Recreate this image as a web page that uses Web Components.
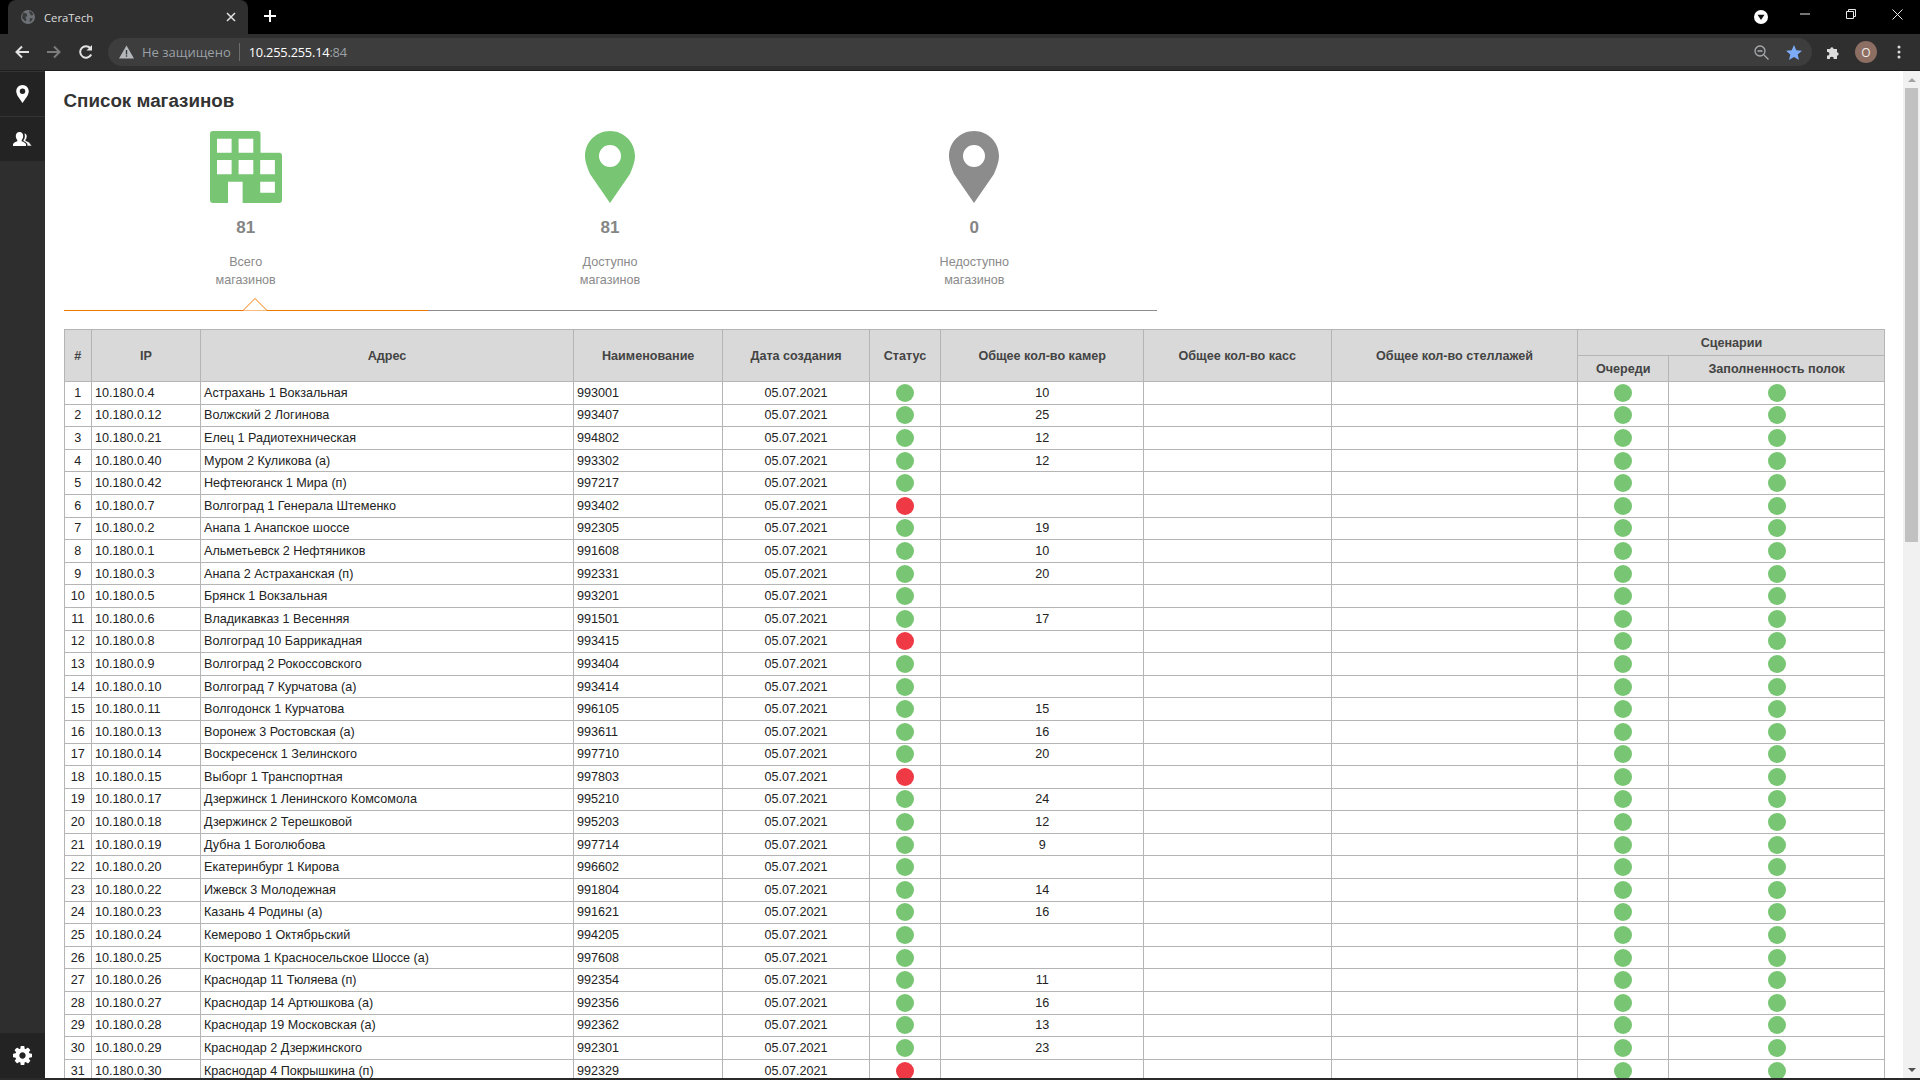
<!DOCTYPE html>
<html lang="ru">
<head>
<meta charset="utf-8">
<title>CeraTech</title>
<style>
    html, body { margin: 0; height: 100%; overflow: hidden; background: #fff; }
    body { display: flex; flex-direction: column; height: 1080px; font-family: "Liberation Sans", Arial, sans-serif; }
</style>
</head>
<body>
<browser-chrome></browser-chrome>
<app-shell>
    <side-nav slot="nav"></side-nav>
    <page-content slot="main">
        <stat-tabs>
            <stat-tile value="81" icon="building" tone="green">Всего<br>магазинов</stat-tile>
            <stat-tile value="81" icon="pin" tone="green">Доступно<br>магазинов</stat-tile>
            <stat-tile value="0" icon="pin" tone="grey">Недоступно<br>магазинов</stat-tile>
        </stat-tabs>
        <store-table></store-table>
    </page-content>
    <page-scrollbar slot="scroll"></page-scrollbar>
</app-shell>
<task-strip></task-strip>

<script>
class BrowserChrome extends HTMLElement {
    constructor() {
        super();
        this.attachShadow({mode: 'open'}).innerHTML = `
        <style>
            :host { display: block; flex: none; height: 71px; font-family: "Open Sans", sans-serif; color: #fff; }
            svg { display: block; flex: none; }
            .strip { height: 34px; background: #000; display: flex; align-items: stretch; padding-left: 8px; }
            .tab {
                width: 240px; background: #2f2f2f; border-radius: 8px 8px 0 0;
                display: flex; align-items: center; padding: 0 12px 0 12px; box-sizing: border-box;
                font-size: 11.3px; color: #dfdfdf;
            }
            .tab span { flex: 1; margin-left: 8px; }
            .plus { margin: 9px 0 0 15px; }
            .spacer { flex: 1; }
            .win { display: flex; align-items: center; }
            .win .ext { margin-right: 14px; }
            .win .btn { width: 46px; display: flex; justify-content: center; padding-bottom: 6px; box-sizing: border-box; }
            .bar {
                height: 37px; background: #2f2f2f; border-bottom: 1px solid #1f1f1f; box-sizing: border-box;
                display: flex; align-items: center; padding: 0 0 0 14px;
            }
            .nav { display: flex; gap: 16px; margin-right: 14px; }
            .omni {
                flex: 1; height: 28px; background: #3d3d3d; border-radius: 14px; display: flex; align-items: center;
                padding: 0 10px 0 11px; font-size: 13px; color: #9aa0a6;
            }
            .omni .warn { margin-left: 8px; }
            .omni .sep { width: 1px; height: 18px; background: #6b6b6b; margin: 0 9px 0 8px; }
            .omni .url { font-size: 12.8px; letter-spacing: -.2px; }
            .omni b { font-weight: 400; color: #fff; }
            .omni .fill { flex: 1; }
            .tools { display: flex; align-items: center; padding: 0 19px 0 14px; }
            .avatar {
                width: 22px; height: 22px; border-radius: 50%; background: #8d6e63; color: #f3ece9; font-size: 12px;
                display: flex; align-items: center; justify-content: center; margin: 0 20px 0 14px;
            }
        </style>
        <div class="strip">
            <div class="tab">
                <svg width="16" height="16" viewBox="0 0 16 16"><circle cx="8" cy="8" r="7" fill="#6d7074"/><path d="M3 3.500l3.500 1 1 2.500-2 1 1 3-1 1.500L2 9zM9 2l3 1 1.500 3-2.500.5L9.500 4zM10 9l3 .5-2.500 3.500-1-1z" fill="#3a3b3d"/></svg>
                <span>CeraTech</span>
                <svg width="10" height="10" viewBox="0 0 10 10"><path d="M1 1l8 8M9 1l-8 8" stroke="#e3e3e3" stroke-width="1.500"/></svg>
            </div>
            <svg class="plus" width="14" height="14" viewBox="0 0 14 14"><path d="M7 1v12M1 7h12" stroke="#fff" stroke-width="2"/></svg>
            <div class="spacer"></div>
            <div class="win">
                <svg class="ext" width="14" height="14" viewBox="0 0 14 14"><circle cx="7" cy="7" r="7" fill="#fff"/><path d="M3.500 4.800h7L7 10z" fill="#111"/></svg>
                <div class="btn"><svg width="10" height="10" viewBox="0 0 10 10"><path d="M0 5h10" stroke="#e8e8e8"/></svg></div>
                <div class="btn"><svg width="10" height="10" viewBox="0 0 10 10" fill="none" stroke="#e8e8e8"><path d="M.5 2.500h7v7h-7zM2.500 2.500v-2h7v7h-2"/></svg></div>
                <div class="btn"><svg width="11" height="11" viewBox="0 0 11 11"><path d="M.5.500l10 10M10.500.500l-10 10" stroke="#e8e8e8"/></svg></div>
            </div>
        </div>
        <div class="bar">
            <div class="nav">
                <svg width="16" height="16" viewBox="0 0 16 16" fill="none" stroke="#e3e3e3" stroke-width="2"><path d="M15 8H2.500M8 2.500L2.500 8 8 13.500"/></svg>
                <svg width="16" height="16" viewBox="0 0 16 16" fill="none" stroke="#7c7c7c" stroke-width="2"><path d="M1 8h12.500M8 2.500L13.500 8 8 13.500"/></svg>
                <svg width="16" height="16" viewBox="0 0 16 16" fill="none" stroke="#e3e3e3" stroke-width="2"><path d="M13.200 10.500A5.800 5.800 0 1 1 12.400 4.200"/><path d="M14 1v5.500H8.500z" fill="#e3e3e3" stroke="none"/></svg>
            </div>
            <div class="omni">
                <svg width="15" height="14" viewBox="0 0 15 14"><path d="M7.500.500L15 13.500H0z" fill="#b5b8bb"/><path d="M6.800 5h1.400v4.500H6.800zM6.800 10.300h1.400v1.500H6.800z" fill="#3d3d3d"/></svg>
                <span class="warn">Не защищено</span>
                <span class="sep"></span>
                <span class="url"><b>10.255.255.14</b>:84</span>
                <span class="fill"></span>
                <svg width="15" height="15" viewBox="0 0 15 15" fill="none" stroke="#a8abae" stroke-width="1.300"><circle cx="6" cy="6" r="5"/><path d="M10 10l4.500 4.500M3.500 6h5"/></svg>
                <svg style="margin-left:17px" width="16" height="15" viewBox="0 0 16 15"><path d="M8 0l2.300 5.200 5.700.5-4.300 3.700 1.300 5.600L8 12.100 3 15l1.300-5.600L0 5.700l5.700-.5z" fill="#7cacf8"/></svg>
            </div>
            <div class="tools">
                <svg width="15" height="15" viewBox="0 0 15 15"><path d="M1 4h3.200a1.700 1.700 0 1 1 3.400 0H11v3.300a1.700 1.700 0 1 1 0 3.400V14H7.500a1.800 1.800 0 1 0-3.500 0H1v-3.600a1.800 1.800 0 1 0 0-3.400z" fill="#dcdcdc"/></svg>
                <div class="avatar">О</div>
                <svg width="4" height="14" viewBox="0 0 4 14" fill="#dcdcdc"><circle cx="2" cy="2" r="1.500"/><circle cx="2" cy="7" r="1.500"/><circle cx="2" cy="12" r="1.500"/></svg>
            </div>
        </div>
        `;
    }
}

class AppShell extends HTMLElement {
    constructor() {
        super();
        this.attachShadow({mode: 'open'}).innerHTML = `
        <style>
            :host { display: flex; flex: 1; min-height: 0; }
            .main { display: block; flex: 1; min-width: 0; overflow: hidden; }
        </style>
        <slot name="nav"></slot>
        <div class="main"><slot name="main"></slot></div>
        <slot name="scroll"></slot>
        `;
    }
}

class SideNav extends HTMLElement {
    constructor() {
        super();
        this.attachShadow({mode: 'open'}).innerHTML = `
        <style>
            :host { display: flex; flex-direction: column; flex: none; width: 45px; background: #2e2e2e; }
            .item { height: 45px; background: #232323; border-top: 1px solid #343434; box-sizing: border-box; display: flex; align-items: center; justify-content: center; }
            .gap { flex: 1; }
            .item.last { border-top: 0; }
            svg { display: block; }
        </style>
        <div class="item">
            <svg width="13" height="18" viewBox="0 0 50 72" fill="#fff"><path fill-rule="evenodd" d="M25 0C11.200 0 0 11.200 0 25 0 31 3 38 5 43L25 72 45 43C47 38 50 31 50 25 50 11.200 38.800 0 25 0zM25 14A11 11 0 1 1 25 36 11 11 0 0 1 25 14z"/></svg>
        </div>
        <div class="item">
            <svg width="19" height="15" viewBox="0 0 19 15" fill="#fff"><path d="M6.500 0C9 0 10.200 1.800 10.200 4c0 1.700-.7 3.100-1.500 3.900v1.300c2 .7 3.800 1.500 4.300 3V14H0v-1.800c.5-1.500 2.300-2.300 4.300-3V7.900C3.500 7.100 2.800 5.700 2.800 4 2.800 1.800 4 0 6.500 0z"/><path d="M11 1.200c2 0 3 1.500 3 3.300 0 1.400-.6 2.500-1.200 3.200v1.100c1.800.6 3.400 1.200 4 2.400L19 14h-4.800l-.2-2.200c-.6-1.100-2-1.900-3.800-2.500V8.200c.9-1 1.400-2.500 1.400-4.200 0-1-.2-1.900-.6-2.700z" stroke="#232323" stroke-width=".6"/></svg>
        </div>
        <div class="gap"></div>
        <div class="item last">
            <svg width="19" height="19" viewBox="128 128 1536 1536" fill="#fff"><path d="M1152 896q0-106-75-181t-181-75-181 75-75 181 75 181 181 75 181-75 75-181zm512-109v222q0 12-8 23t-20 13l-185 28q-19 54-39 91 35 50 107 138 10 12 10 25t-9 23q-27 37-99 108t-94 71q-12 0-26-9l-138-108q-44 23-91 38-16 136-29 186-7 28-36 28h-222q-14 0-24.500-8.500t-11.500-21.500l-28-184q-49-16-90-37l-141 107q-10 9-25 9-14 0-25-11-126-114-165-168-7-10-7-23 0-12 8-23 15-21 51-66.500t54-70.500q-27-50-41-99l-183-27q-13-2-21-12.500t-8-23.500v-222q0-12 8-23t19-13l186-28q14-46 39-92-40-57-107-138-10-12-10-24 0-10 9-23 26-36 98.500-107.500t94.500-71.500q13 0 26 10l138 107q44-23 91-38 16-136 29-186 7-28 36-28h222q14 0 24.500 8.500t11.500 21.500l28 184q49 16 90 37l142-107q9-9 24-9 13 0 25 10 129 119 165 170 7 8 7 22 0 12-8 23-15 21-51 66.500t-54 70.500q26 50 41 98l183 28q13 2 21 12.500t8 23.500z"/></svg>
        </div>
        `;
    }
}

class PageContent extends HTMLElement {
    constructor() {
        super();
        this.attachShadow({mode: 'open'}).innerHTML = `
        <style>
            :host { display: block; padding: 19px 18px 0 18.500px; background: #fff; }
            h1 { margin: 0 0 19px; font-size: 18.800px; line-height: 22px; font-weight: 700; color: #333; }
        </style>
        <h1>Список магазинов</h1>
        <slot></slot>
        `;
    }
}

class StatTabs extends HTMLElement {
    constructor() {
        super();
        this.attachShadow({mode: 'open'}).innerHTML = `
        <style>
            :host { display: block; width: 1093px; position: relative; margin-bottom: 18px; }
            .tiles { display: grid; grid-template-columns: repeat(3, 1fr); padding-bottom: 21px; }
            .rule { display: grid; grid-template-columns: 364px 1fr; height: 1px; }
            .rule i { display: block; background: #8c8c8c; }
            .rule i:first-child { background: #f07800; }
            .notch { position: absolute; left: 178px; bottom: 0; display: block; }
        </style>
        <div class="tiles"><slot></slot></div>
        <div class="rule"><i></i><i></i></div>
        <svg class="notch" width="26" height="14" viewBox="0 0 26 14"><path d="M0 13.500h1L13 1.500 25 13.500h1" fill="#fff" stroke="#f07800"/></svg>
        `;
    }
}

const TILE_ICONS = {
    building: `<svg width="72" height="72" viewBox="0 0 72 72"><path fill-rule="evenodd" d="M3 0H47.500A3 3 0 0 1 50.500 3V21.700H69A3 3 0 0 1 72 24.700V69A3 3 0 0 1 69 72H32.600V50.700H18V72H3A3 3 0 0 1 0 69V3A3 3 0 0 1 3 0zM7 7.700V21.700H21.600V7.700zM28.600 7.700V21.700H43.300V7.700zM7 29V43.300H21.600V29zM28.600 29V43.300H43.300V29zM50.200 29V43.300H64.900V29zM50.200 50.700V61.700H64.900V50.700z"/></svg>`,
    pin: `<svg width="50" height="72" viewBox="0 0 50 72"><path fill-rule="evenodd" d="M25 0C11.200 0 0 11.200 0 25 0 31 3 38 5 43L25 72 45 43C47 38 50 31 50 25 50 11.200 38.800 0 25 0zM25 14A11 11 0 1 1 25 36 11 11 0 0 1 25 14z"/></svg>`
};

class StatTile extends HTMLElement {
    constructor() {
        super();
        this.attachShadow({mode: 'open'});
    }
    connectedCallback() {
        const fill = this.getAttribute('tone') === 'grey' ? '#8c8c8c' : '#78c673';
        this.shadowRoot.innerHTML = `
        <style>
            :host { display: flex; flex-direction: column; align-items: center; text-align: center; color: #8a8a8a; }
            .icon { height: 72px; fill: ${fill}; }
            svg { display: block; }
            .num { margin-top: 14px; font-size: 17px; line-height: 21px; font-weight: 700; color: #858585; }
            .label { margin-top: 15px; font-size: 12.600px; line-height: 18px; }
        </style>
        <div class="icon">${TILE_ICONS[this.getAttribute('icon')]}</div>
        <div class="num">${this.getAttribute('value')}</div>
        <div class="label"><slot></slot></div>
        `;
    }
}

const STORES = [
    [4, 'Астрахань 1 Вокзальная', 993001, 1, 10],
    [12, 'Волжский 2 Логинова', 993407, 1, 25],
    [21, 'Елец 1 Радиотехническая', 994802, 1, 12],
    [40, 'Муром 2 Куликова (а)', 993302, 1, 12],
    [42, 'Нефтеюганск 1 Мира (п)', 997217, 1, ''],
    [7, 'Волгоград 1 Генерала Штеменко', 993402, 0, ''],
    [2, 'Анапа 1 Анапское шоссе', 992305, 1, 19],
    [1, 'Альметьевск 2 Нефтяников', 991608, 1, 10],
    [3, 'Анапа 2 Астраханская (п)', 992331, 1, 20],
    [5, 'Брянск 1 Вокзальная', 993201, 1, ''],
    [6, 'Владикавказ 1 Весенняя', 991501, 1, 17],
    [8, 'Волгоград 10 Баррикадная', 993415, 0, ''],
    [9, 'Волгоград 2 Рокоссовского', 993404, 1, ''],
    [10, 'Волгоград 7 Курчатова (а)', 993414, 1, ''],
    [11, 'Волгодонск 1 Курчатова', 996105, 1, 15],
    [13, 'Воронеж 3 Ростовская (а)', 993611, 1, 16],
    [14, 'Воскресенск 1 Зелинского', 997710, 1, 20],
    [15, 'Выборг 1 Транспортная', 997803, 0, ''],
    [17, 'Дзержинск 1 Ленинского Комсомола', 995210, 1, 24],
    [18, 'Дзержинск 2 Терешковой', 995203, 1, 12],
    [19, 'Дубна 1 Боголюбова', 997714, 1, 9],
    [20, 'Екатеринбург 1 Кирова', 996602, 1, ''],
    [22, 'Ижевск 3 Молодежная', 991804, 1, 14],
    [23, 'Казань 4 Родины (а)', 991621, 1, 16],
    [24, 'Кемерово 1 Октябрьский', 994205, 1, ''],
    [25, 'Кострома 1 Красносельское Шоссе (а)', 997608, 1, ''],
    [26, 'Краснодар 11 Тюляева (п)', 992354, 1, 11],
    [27, 'Краснодар 14 Артюшкова (а)', 992356, 1, 16],
    [28, 'Краснодар 19 Московская (а)', 992362, 1, 13],
    [29, 'Краснодар 2 Дзержинского', 992301, 1, 23],
    [30, 'Краснодар 4 Покрышкина (п)', 992329, 0, '']
];

class StoreTable extends HTMLElement {
    constructor() {
        super();
        const dot = ok => `<span class="dot ${ok ? '' : 'off'}"></span>`;
        const rows = STORES.map((s, i) => `
            <tr>
                <td class="c">${i + 1}</td>
                <td>10.180.0.${s[0]}</td>
                <td>${s[1]}</td>
                <td>${s[2]}</td>
                <td class="c">05.07.2021</td>
                <td class="c">${dot(s[3])}</td>
                <td class="c">${s[4]}</td>
                <td></td>
                <td></td>
                <td class="c">${dot(1)}</td>
                <td class="c">${dot(1)}</td>
            </tr>`).join('');
        this.attachShadow({mode: 'open'}).innerHTML = `
        <style>
            :host { display: block; }
            table { border-collapse: collapse; table-layout: fixed; width: 1821px; font-size: 12.600px; color: #222; }
            th, td { border: 1px solid #b5b5b5; padding: 0 3px; overflow: hidden; white-space: nowrap; }
            th { background: #d9d9d9; color: #444; font-weight: 700; text-align: center; height: 25px; }
            td { height: 21.600px; line-height: 18px; }
            .c { text-align: center; }
            .dot { display: block; width: 18px; height: 18px; border-radius: 50%; background: #78c673; margin: 0 auto; }
            .dot.off { background: #ef3a45; }
        </style>
        <table>
            <colgroup>
                <col style="width:27.500px"><col style="width:109px"><col style="width:373px"><col style="width:149.400px">
                <col style="width:146.200px"><col style="width:71.800px"><col style="width:202.600px"><col style="width:187.600px">
                <col style="width:246.900px"><col style="width:90.500px"><col style="width:216.500px">
            </colgroup>
            <thead>
                <tr>
                    <th rowspan="2">#</th><th rowspan="2">IP</th><th rowspan="2">Адрес</th><th rowspan="2">Наименование</th>
                    <th rowspan="2">Дата создания</th><th rowspan="2">Статус</th><th rowspan="2">Общее кол-во камер</th>
                    <th rowspan="2">Общее кол-во касс</th><th rowspan="2">Общее кол-во стеллажей</th><th colspan="2">Сценарии</th>
                </tr>
                <tr><th>Очереди</th><th>Заполненность полок</th></tr>
            </thead>
            <tbody>${rows}</tbody>
        </table>
        `;
    }
}

class PageScrollbar extends HTMLElement {
    constructor() {
        super();
        this.attachShadow({mode: 'open'}).innerHTML = `
        <style>
            :host { display: flex; flex-direction: column; align-items: center; flex: none; width: 17px; background: #f1f1f1; box-sizing: border-box; }
            .up, .down { width: 0; height: 0; border-left: 4px solid transparent; border-right: 4px solid transparent; }
            .up { border-bottom: 4px solid #a3a3a3; margin-top: 7px; }
            .down { border-top: 4px solid #505050; margin-bottom: 6px; }
            .thumb { width: 13px; height: 454px; background: #c1c1c1; margin-top: 6px; }
            .gap { flex: 1; }
        </style>
        <div class="up"></div>
        <div class="thumb"></div>
        <div class="gap"></div>
        <div class="down"></div>
        `;
    }
}

class TaskStrip extends HTMLElement {
    constructor() {
        super();
        this.attachShadow({mode: 'open'}).innerHTML = `
        <style>
            :host { display: flex; flex: none; height: 2px; background: #2a2a2a; padding-left: 100px; }
            i { display: block; width: 44px; background: #4a4a4a; }
        </style>
        <i></i>
        `;
    }
}

customElements.define('browser-chrome', BrowserChrome);
customElements.define('app-shell', AppShell);
customElements.define('side-nav', SideNav);
customElements.define('page-content', PageContent);
customElements.define('stat-tabs', StatTabs);
customElements.define('stat-tile', StatTile);
customElements.define('store-table', StoreTable);
customElements.define('page-scrollbar', PageScrollbar);
customElements.define('task-strip', TaskStrip);
</script>
</body>
</html>
